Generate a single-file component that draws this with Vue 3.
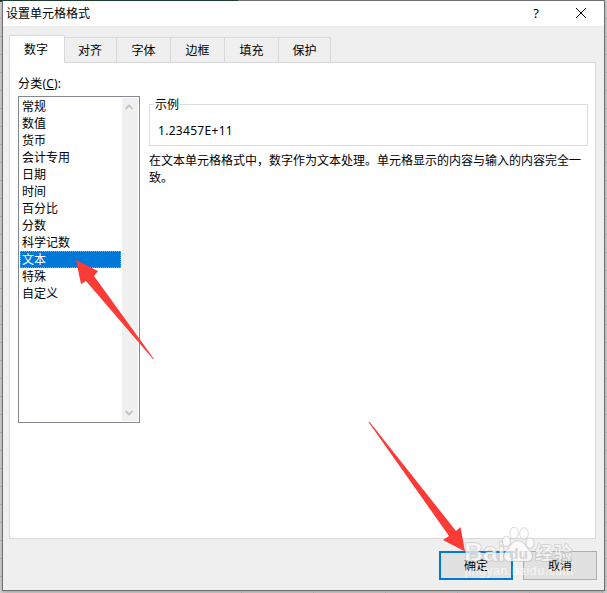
<script setup>
const tabs = ['数字', '对齐', '字体', '边框', '填充', '保护']
const widths = [56, 52, 54, 54, 54, 52]
const categories = ['常规', '数值', '货币', '会计专用', '日期', '时间', '百分比', '分数', '科学记数', '文本', '特殊', '自定义']
const selected = '文本'
</script>

<template>
  <div class="sheet">
    <div class="dialog">
      <header class="titlebar">
        <span class="title">设置单元格格式</span>
        <span class="help">?</span>
        <svg class="close" width="12" height="12" viewBox="0 0 12 12"><path d="M1 1L11 11M11 1L1 11" /></svg>
      </header>
      <nav class="tabs">
        <div v-for="(t, i) in tabs" :key="t" class="tab" :class="{ active: i === 0 }" :style="{ width: widths[i] + 'px' }">{{ t }}</div>
      </nav>
      <main class="panel">
        <div class="label">分类(<u>C</u>):</div>
        <div class="columns">
          <div class="listbox">
            <ul>
              <li v-for="c in categories" :key="c" :class="{ selected: c === selected }">{{ c }}</li>
            </ul>
            <div class="scrollbar">
              <svg width="8" height="6" viewBox="0 0 8 6"><path d="M.7 5L4 1.5L7.3 5" /></svg>
              <svg width="8" height="6" viewBox="0 0 8 6"><path d="M.7 1L4 4.5L7.3 1" /></svg>
            </div>
          </div>
          <div class="detail">
            <div class="group">
              <span class="legend">示例</span>
              <div class="sample">1.23457E+11</div>
            </div>
            <p>在文本单元格格式中，数字作为文本处理。单元格显示的内容与输入的内容完全一致。</p>
          </div>
        </div>
      </main>
      <footer class="buttons">
        <button class="ok">确定</button>
        <button>取消</button>
      </footer>
    </div>

    <svg class="overlay" width="607" height="593" viewBox="0 0 607 593">
      <path class="ribbon" d="M0 0H238V1H2V2H0Z" />
      <path class="gridline" d="M241.500 591V593M313.500 591V593M385.500 591V593M457.500 591V593M529.500 591V593M602.500 591V593" />
      <g class="mark">
        <text class="latin" x="464" y="561" textLength="41" lengthAdjust="spacingAndGlyphs">Bai</text>
        <text class="cjk" x="535" y="560" textLength="37">经验</text>
        <ellipse cx="506.500" cy="541.500" rx="3.800" ry="5" />
        <ellipse cx="514" cy="533" rx="4" ry="5.500" />
        <ellipse cx="524" cy="533.500" rx="4" ry="5.500" />
        <ellipse cx="530" cy="543" rx="3.800" ry="5" />
        <path d="M518 541C511 541 511 547 507 550C502 555 504 562 510 561H526C533 562 534 555 529 550C525 547 525 541 518 541Z" />
        <text class="du" x="509" y="559" textLength="19" lengthAdjust="spacingAndGlyphs">du</text>
        <text class="url" x="465" y="575" textLength="108">jingyan.baidu.com</text>
      </g>
      <path class="arrow" d="M76 260L98 271L94 276L154 359L153 359L86 281L81 284Z" />
      <path class="arrow" d="M368.500 422L369.500 421.800L456 531L460.500 527L465 551.500L443 540L449 536Z" />
    </svg>
  </div>
</template>

<style>
body { margin: 0; overflow: hidden; }
</style>

<style scoped>
.sheet {
  position: relative; box-sizing: border-box; width: 607px; height: 593px; padding-left: 2px; overflow: hidden;
  background: repeating-linear-gradient(#d4d4d4 0 17px, #b2b2b2 17px 18px) 0 1px;
  font: 12px/17px "Noto Sans", "Noto Sans CJK SC", sans-serif; color: #000;
}
.dialog { box-sizing: border-box; width: 603px; height: 591px; border: 1px solid #707070; background: #efefef; box-shadow: 0 1px 4px #999; }
.titlebar { display: flex; align-items: center; height: 25px; background: #fff; padding: 0 17px 0 3px; }
.title { flex: 1; }
.help { font-size: 13px; margin-right: 36px; }
.close { display: block; margin-bottom: 1px; stroke: #000; stroke-width: 1; fill: none; }
.tabs { display: flex; align-items: flex-end; height: 36px; padding-left: 6px; }
.tab { box-sizing: border-box; height: 25px; border: 1px solid #d9d9d9; border-width: 1px 1px 0 0; text-align: center; line-height: 25px; }
.tab:nth-child(2) { padding-right: 1px; }
.tab.active { position: relative; height: 28px; margin-bottom: -1px; padding-right: 2px; border-left-width: 1px; background: #fff; line-height: 27px; }
.panel { box-sizing: border-box; width: 587px; height: 477px; margin-left: 6px; border: 1px solid #d9d9d9; background: #fff; padding: 12px 7px 0 8px; }
.label { height: 21px; letter-spacing: .2px; }
.label u { text-underline-offset: 1px; }
.columns { display: flex; gap: 9px; }
.listbox { display: flex; box-sizing: border-box; width: 122px; height: 327px; border: 1px solid #828790; padding: 1px; }
ul { list-style: none; margin: 0; padding: 0; width: 102px; }
li { box-sizing: border-box; height: 17px; width: 101px; padding-left: 2px; white-space: nowrap; line-height: 17px; }
li.selected { background: #0078d7; color: #fff; outline: 1px dotted #ff8728; outline-offset: -1px; }
.scrollbar { display: flex; box-sizing: border-box; width: 16px; padding: 6px 2px 5px 0; flex-direction: column; justify-content: space-between; align-items: center; background: #f0f0f0; }
.scrollbar path { fill: none; stroke: #bfbfbf; stroke-width: 1.8; }
.detail { flex: 1; padding-top: 8px; }
.group { position: relative; box-sizing: border-box; height: 42px; border: 1px solid #dcdcdc; }
.legend { position: absolute; left: 4px; top: -9px; padding: 0 1px; background: #fff; }
.sample { padding: 17px 0 0 8px; letter-spacing: .3px; }
p { margin: 6px 0 0; }
.buttons { display: flex; justify-content: flex-end; gap: 10px; padding: 12px 7px 0 0; }
button { box-sizing: border-box; width: 74px; height: 29px; margin: 0; padding: 0; border: 1px solid #adadad; background: #e1e1e1; font: inherit; color: #000; }
button.ok { border: 2px solid #0078d7; }
.overlay { position: absolute; left: 0; top: 0; }
.ribbon { fill: #1f3f2e; }
.gridline { stroke: #a8a8a8; }
.arrow { fill: #fc3a36; }
.mark { fill: rgba(255, 255, 255, .72); stroke: rgba(165, 165, 165, .45); stroke-width: 1.4; paint-order: stroke; }
.latin { font: bold 25px "Liberation Sans", sans-serif; }
.cjk { font: bold 18px "Noto Sans CJK SC", sans-serif; }
.mark .du { font: bold 15px "Liberation Sans", sans-serif; fill: #d4d4d4; stroke: none; }
.mark .url { font: 12px "Liberation Sans", sans-serif; stroke: none; }
</style>
